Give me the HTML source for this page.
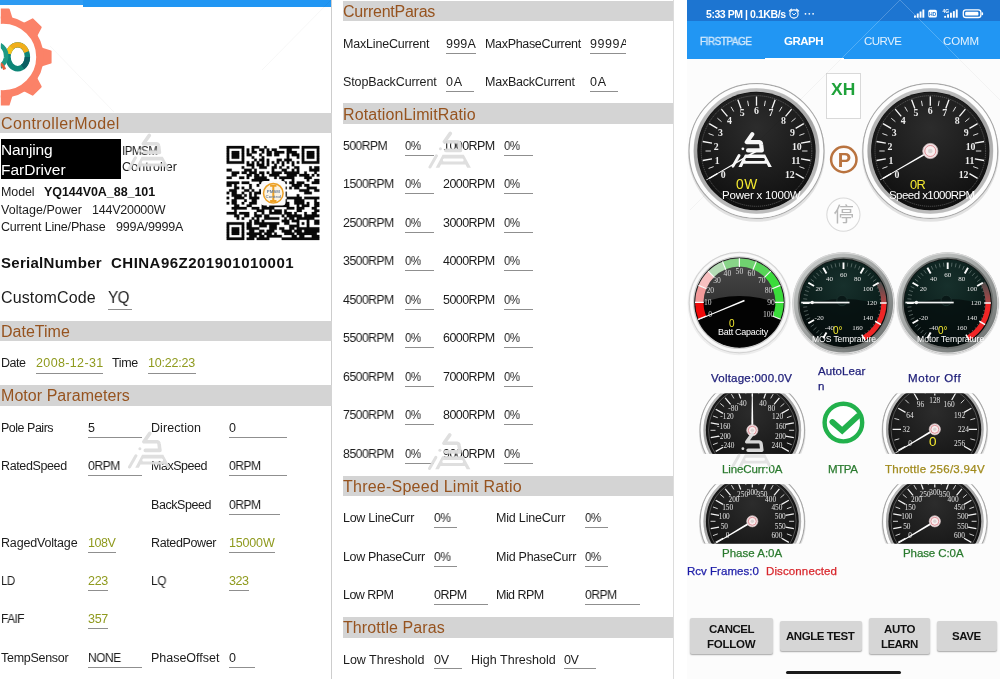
<!DOCTYPE html>
<html lang="en"><head><meta charset="utf-8"><title>Controller Parameters</title>
<style>
html,body{margin:0;padding:0;background:#fff;}
body{width:1000px;height:679px;position:relative;overflow:hidden;font-family:"Liberation Sans", sans-serif;}
.t{position:absolute;white-space:nowrap;line-height:1;transform-origin:0 50%;will-change:transform;}
svg{position:absolute;left:0;top:0;will-change:transform;}
</style></head><body>
<div style="position:absolute;left:0px;top:0px;width:83px;height:5px;background:#2e9bf2;"></div>
<div style="position:absolute;left:83px;top:0px;width:249px;height:6.6px;background:#2196f3;"></div>
<div style="position:absolute;left:331px;top:0px;width:1.1px;height:679px;background:#cdcdcd;"></div>
<div style="position:absolute;left:0px;top:112.5px;width:332px;height:20.6px;background:#d4d4d4;"></div>
<div style="position:absolute;left:1px;top:138.6px;width:120px;height:40.4px;background:#000;"></div>
<div style="position:absolute;left:108px;top:308.6px;width:24px;height:1.2px;background:#8f8f8f;"></div>
<div style="position:absolute;left:0px;top:321.2px;width:332px;height:20.3px;background:#d4d4d4;"></div>
<div style="position:absolute;left:35.6px;top:372.5px;width:67.4px;height:1.2px;background:#8f8f8f;"></div>
<div style="position:absolute;left:148px;top:372.5px;width:48px;height:1.2px;background:#8f8f8f;"></div>
<div style="position:absolute;left:0px;top:385px;width:332px;height:20.8px;background:#d4d4d4;"></div>
<div style="position:absolute;left:87.7px;top:436.6px;width:54.3px;height:1.2px;background:#8f8f8f;"></div>
<div style="position:absolute;left:229px;top:436.6px;width:58px;height:1.2px;background:#8f8f8f;"></div>
<div style="position:absolute;left:87.7px;top:474.6px;width:54.3px;height:1.2px;background:#8f8f8f;"></div>
<div style="position:absolute;left:229px;top:474.6px;width:58px;height:1.2px;background:#8f8f8f;"></div>
<div style="position:absolute;left:229px;top:513.6px;width:51px;height:1.2px;background:#8f8f8f;"></div>
<div style="position:absolute;left:87.7px;top:551.6px;width:27.9px;height:1.2px;background:#8f8f8f;"></div>
<div style="position:absolute;left:229px;top:551.6px;width:45.7px;height:1.2px;background:#8f8f8f;"></div>
<div style="position:absolute;left:87.7px;top:589.6px;width:20.3px;height:1.2px;background:#8f8f8f;"></div>
<div style="position:absolute;left:229px;top:589.6px;width:20px;height:1.2px;background:#8f8f8f;"></div>
<div style="position:absolute;left:87.7px;top:627.6px;width:20.3px;height:1.2px;background:#8f8f8f;"></div>
<div style="position:absolute;left:87.7px;top:666.6px;width:54.3px;height:1.2px;background:#8f8f8f;"></div>
<div style="position:absolute;left:229px;top:666.6px;width:26px;height:1.2px;background:#8f8f8f;"></div>
<div style="position:absolute;left:673.2px;top:0px;width:1px;height:679px;background:#dcdcdc;"></div>
<div style="position:absolute;left:342.8px;top:1px;width:330.49999999999994px;height:19.5px;background:#d4d4d4;"></div>
<div style="position:absolute;left:446px;top:52.8px;width:29.8px;height:1.2px;background:#8f8f8f;"></div>
<div style="position:absolute;left:590px;top:52.8px;width:36px;height:1.2px;background:#8f8f8f;"></div>
<div style="position:absolute;left:446px;top:91px;width:28px;height:1.2px;background:#8f8f8f;"></div>
<div style="position:absolute;left:590px;top:91px;width:28px;height:1.2px;background:#8f8f8f;"></div>
<div style="position:absolute;left:342.8px;top:103.3px;width:330.49999999999994px;height:20.8px;background:#d4d4d4;"></div>
<div style="position:absolute;left:405px;top:155.0px;width:29.4px;height:1.2px;background:#8f8f8f;"></div>
<div style="position:absolute;left:504px;top:155.0px;width:29.4px;height:1.2px;background:#8f8f8f;"></div>
<div style="position:absolute;left:405px;top:193.0px;width:29.4px;height:1.2px;background:#8f8f8f;"></div>
<div style="position:absolute;left:504px;top:193.0px;width:29.4px;height:1.2px;background:#8f8f8f;"></div>
<div style="position:absolute;left:405px;top:232.0px;width:29.4px;height:1.2px;background:#8f8f8f;"></div>
<div style="position:absolute;left:504px;top:232.0px;width:29.4px;height:1.2px;background:#8f8f8f;"></div>
<div style="position:absolute;left:405px;top:270.0px;width:29.4px;height:1.2px;background:#8f8f8f;"></div>
<div style="position:absolute;left:504px;top:270.0px;width:29.4px;height:1.2px;background:#8f8f8f;"></div>
<div style="position:absolute;left:405px;top:309.0px;width:29.4px;height:1.2px;background:#8f8f8f;"></div>
<div style="position:absolute;left:504px;top:309.0px;width:29.4px;height:1.2px;background:#8f8f8f;"></div>
<div style="position:absolute;left:405px;top:347.0px;width:29.4px;height:1.2px;background:#8f8f8f;"></div>
<div style="position:absolute;left:504px;top:347.0px;width:29.4px;height:1.2px;background:#8f8f8f;"></div>
<div style="position:absolute;left:405px;top:386.0px;width:29.4px;height:1.2px;background:#8f8f8f;"></div>
<div style="position:absolute;left:504px;top:386.0px;width:29.4px;height:1.2px;background:#8f8f8f;"></div>
<div style="position:absolute;left:405px;top:424.0px;width:29.4px;height:1.2px;background:#8f8f8f;"></div>
<div style="position:absolute;left:504px;top:424.0px;width:29.4px;height:1.2px;background:#8f8f8f;"></div>
<div style="position:absolute;left:405px;top:463.0px;width:29.4px;height:1.2px;background:#8f8f8f;"></div>
<div style="position:absolute;left:504px;top:463.0px;width:29.4px;height:1.2px;background:#8f8f8f;"></div>
<div style="position:absolute;left:342.8px;top:475.5px;width:330.49999999999994px;height:20.8px;background:#d4d4d4;"></div>
<div style="position:absolute;left:433.7px;top:527.2px;width:23.3px;height:1.2px;background:#8f8f8f;"></div>
<div style="position:absolute;left:584.9px;top:527.2px;width:23.1px;height:1.2px;background:#8f8f8f;"></div>
<div style="position:absolute;left:433.7px;top:565.5px;width:23.3px;height:1.2px;background:#8f8f8f;"></div>
<div style="position:absolute;left:584.9px;top:565.5px;width:23.1px;height:1.2px;background:#8f8f8f;"></div>
<div style="position:absolute;left:433.7px;top:603.8px;width:54.0px;height:1.2px;background:#8f8f8f;"></div>
<div style="position:absolute;left:584.9px;top:603.8px;width:54.7px;height:1.2px;background:#8f8f8f;"></div>
<div style="position:absolute;left:342.8px;top:616.7px;width:330.49999999999994px;height:21.2px;background:#d4d4d4;"></div>
<div style="position:absolute;left:433.7px;top:668.2px;width:28.3px;height:1.2px;background:#8f8f8f;"></div>
<div style="position:absolute;left:564px;top:668.2px;width:32.4px;height:1.2px;background:#8f8f8f;"></div>
<div style="position:absolute;left:687px;top:0px;width:313px;height:679px;background:#fcfcfc;"></div>
<div style="position:absolute;left:687px;top:0px;width:313px;height:21px;background:#1d75d1;"></div>
<div style="position:absolute;left:687px;top:20.7px;width:313px;height:38.8px;background:#2196f3;"></div>
<div style="position:absolute;left:765.2px;top:58.2px;width:78.4px;height:2px;background:#ffffff;"></div>
<div style="position:absolute;left:826px;top:73px;width:34.6px;height:46.2px;background:#fff;border:1px solid #d9d9d9;box-sizing:border-box;"></div>
<div style="position:absolute;left:690px;top:617.6px;width:83px;height:36.4px;background:#d6d6d6;border-radius:2px;box-shadow:0 1px 1.5px rgba(0,0,0,.35);"></div>
<div style="position:absolute;left:780px;top:621px;width:82px;height:29.5px;background:#d6d6d6;border-radius:2px;box-shadow:0 1px 1.5px rgba(0,0,0,.35);"></div>
<div style="position:absolute;left:869.4px;top:617.6px;width:60.2px;height:36.4px;background:#d6d6d6;border-radius:2px;box-shadow:0 1px 1.5px rgba(0,0,0,.35);"></div>
<div style="position:absolute;left:936.6px;top:621px;width:60.2px;height:29.5px;background:#d6d6d6;border-radius:2px;box-shadow:0 1px 1.5px rgba(0,0,0,.35);"></div>
<div style="position:absolute;left:785.6px;top:671px;width:115.2px;height:3px;background:#1a1a1a;border-radius:2px;"></div>
<svg width="1000" height="679" viewBox="0 0 1000 679" style="z-index:2"><defs>
<linearGradient id="bz" x1="0" y1="0" x2="0.25" y2="1">
 <stop offset="0" stop-color="#f6f6f6"/><stop offset="0.3" stop-color="#e4e4e4"/>
 <stop offset="0.62" stop-color="#cfcfcf"/><stop offset="1" stop-color="#ececec"/>
</linearGradient>
<linearGradient id="bzin" x1="0" y1="0" x2="0.3" y2="1"><stop offset="0" stop-color="#c9c9c9"/><stop offset="0.5" stop-color="#a4a4a4"/><stop offset="1" stop-color="#bcbcbc"/></linearGradient>
<linearGradient id="bzd" x1="0" y1="0" x2="0.8" y2="1">
 <stop offset="0" stop-color="#d4d6d5"/><stop offset="0.45" stop-color="#a6a9a8"/><stop offset="1" stop-color="#6f7372"/>
</linearGradient>
<radialGradient id="face" cx="0.5" cy="0.3" r="0.75">
 <stop offset="0" stop-color="#2c2c2c"/><stop offset="0.55" stop-color="#1c1c1c"/><stop offset="1" stop-color="#0d0d0d"/>
</radialGradient>
<radialGradient id="teal" cx="0.5" cy="0.3" r="0.7">
 <stop offset="0" stop-color="#17302c"/><stop offset="0.6" stop-color="#0c201d"/><stop offset="1" stop-color="#04100e"/>
</radialGradient>
<linearGradient id="battface" x1="0" y1="0" x2="0" y2="1">
 <stop offset="0" stop-color="#4a4a4a"/><stop offset="0.5" stop-color="#333"/><stop offset="1" stop-color="#111"/>
</linearGradient>
<linearGradient id="redfade" x1="0" y1="0" x2="0" y2="1">
 <stop offset="0" stop-color="#4b4f4e"/><stop offset="1" stop-color="#b04545"/>
</linearGradient>
</defs>
<ellipse cx="756.5" cy="153" rx="68.6" ry="68.8" fill="rgba(0,0,0,.10)"/><circle cx="756.5" cy="151" r="68" fill="url(#bz)"/><circle cx="756.5" cy="151" r="67.4" fill="none" stroke="#a9a9a9" stroke-width="1.2"/><circle cx="756.5" cy="151" r="64.92" fill="none" stroke="#fdfdfd" stroke-width="3.76"/><circle cx="756.5" cy="151" r="60.67" fill="none" stroke="url(#bzin)" stroke-width="4.14"/><circle cx="756.5" cy="151" r="59.2" fill="#101010"/><circle cx="756.5" cy="151" r="58.6" fill="url(#face)"/><circle cx="756.5" cy="151" r="55.3" fill="none" stroke="#8a8a8a" stroke-width="0.5" stroke-dasharray="1.2 0.8"/><path d="M717.36 173.60L709.22 178.30M711.99 158.85L702.73 160.48M711.99 143.15L702.73 141.52M717.36 128.40L709.22 123.70M727.45 116.37L721.40 109.17M741.04 108.53L737.83 99.69M756.50 105.80L756.50 96.40M771.96 108.53L775.17 99.69M785.55 116.37L791.60 109.17M795.64 128.40L803.78 123.70M801.01 143.15L810.27 141.52M801.01 158.85L810.27 160.48M795.64 173.60L803.78 178.30" stroke="#f4f4f4" stroke-width="1.35" fill="none" stroke-linecap="butt"/><path d="M713.65 166.60L708.58 168.44M710.90 151.00L705.50 151.00M713.65 135.40L708.58 133.56M721.57 121.69L717.43 118.22M733.70 111.51L731.00 106.83M748.58 106.09L747.64 100.77M764.42 106.09L765.36 100.77M779.30 111.51L782.00 106.83M791.43 121.69L795.57 118.22M799.35 135.40L804.42 133.56M802.10 151.00L807.50 151.00M799.35 166.60L804.42 168.44" stroke="#dedede" stroke-width="1.0" fill="none" stroke-linecap="butt"/><g font-family="Liberation Serif, serif" font-size="9.8" font-weight="700" fill="#ececec" text-anchor="middle"><text x="723.2" y="177.5">0</text><text x="717.1" y="164.2">1</text><text x="716.2" y="149.5">2</text><text x="720.5" y="135.5">3</text><text x="729.5" y="124.0">4</text><text x="742.1" y="116.4">5</text><text x="756.5" y="113.7">6</text><text x="770.9" y="116.4">7</text><text x="783.5" y="124.0">8</text><text x="792.5" y="135.5">9</text><text x="796.8" y="149.5">10</text><text x="795.9" y="164.2">11</text><text x="789.8" y="177.5">12</text></g><polygon points="757.00,151.87 756.00,150.13 706.10,179.70 706.45,180.30" fill="#fff"/>
<ellipse cx="930.3" cy="153" rx="68.6" ry="68.8" fill="rgba(0,0,0,.10)"/><circle cx="930.3" cy="151" r="68" fill="url(#bz)"/><circle cx="930.3" cy="151" r="67.4" fill="none" stroke="#a9a9a9" stroke-width="1.2"/><circle cx="930.3" cy="151" r="64.92" fill="none" stroke="#fdfdfd" stroke-width="3.76"/><circle cx="930.3" cy="151" r="60.67" fill="none" stroke="url(#bzin)" stroke-width="4.14"/><circle cx="930.3" cy="151" r="59.2" fill="#101010"/><circle cx="930.3" cy="151" r="58.6" fill="url(#face)"/><circle cx="930.3" cy="151" r="55.3" fill="none" stroke="#8a8a8a" stroke-width="0.5" stroke-dasharray="1.2 0.8"/><path d="M891.16 173.60L883.02 178.30M885.79 158.85L876.53 160.48M885.79 143.15L876.53 141.52M891.16 128.40L883.02 123.70M901.25 116.37L895.20 109.17M914.84 108.53L911.63 99.69M930.30 105.80L930.30 96.40M945.76 108.53L948.97 99.69M959.35 116.37L965.40 109.17M969.44 128.40L977.58 123.70M974.81 143.15L984.07 141.52M974.81 158.85L984.07 160.48M969.44 173.60L977.58 178.30" stroke="#f4f4f4" stroke-width="1.35" fill="none" stroke-linecap="butt"/><path d="M887.45 166.60L882.38 168.44M884.70 151.00L879.30 151.00M887.45 135.40L882.38 133.56M895.37 121.69L891.23 118.22M907.50 111.51L904.80 106.83M922.38 106.09L921.44 100.77M938.22 106.09L939.16 100.77M953.10 111.51L955.80 106.83M965.23 121.69L969.37 118.22M973.15 135.40L978.22 133.56M975.90 151.00L981.30 151.00M973.15 166.60L978.22 168.44" stroke="#dedede" stroke-width="1.0" fill="none" stroke-linecap="butt"/><g font-family="Liberation Serif, serif" font-size="9.8" font-weight="700" fill="#ececec" text-anchor="middle"><text x="897.0" y="177.5">0</text><text x="890.9" y="164.2">1</text><text x="890.0" y="149.5">2</text><text x="894.3" y="135.5">3</text><text x="903.3" y="124.0">4</text><text x="915.9" y="116.4">5</text><text x="930.3" y="113.7">6</text><text x="944.7" y="116.4">7</text><text x="957.3" y="124.0">8</text><text x="966.3" y="135.5">9</text><text x="970.6" y="149.5">10</text><text x="969.7" y="164.2">11</text><text x="963.6" y="177.5">12</text></g><polygon points="930.80,151.87 929.80,150.13 879.90,179.70 880.25,180.30" fill="#fff"/><circle cx="930.3" cy="151" r="7.6" fill="#f1e4e5" stroke="#d9c4c6" stroke-width="0.7"/><circle cx="930.3" cy="151" r="5.5" fill="#f8eeee" stroke="#d97a84" stroke-width="0.8"/><circle cx="930.3" cy="151" r="2.3" fill="#d9d2d2"/>
<circle cx="739.4" cy="303.6" r="51.699999999999996" fill="rgba(0,0,0,.06)"/><circle cx="739.4" cy="302.6" r="50.8" fill="#e9e9e9"/><circle cx="739.4" cy="302.6" r="50.3" fill="none" stroke="#d2d2d2" stroke-width="1"/><circle cx="739.4" cy="302.6" r="47.70" fill="none" stroke="#f9f9f9" stroke-width="3.10"/><circle cx="739.4" cy="302.6" r="45.800000000000004" fill="none" stroke="#cfcfcf" stroke-width="1.2"/><circle cx="739.4" cy="302.6" r="45.2" fill="#101010"/><circle cx="739.4" cy="302.6" r="44.6" fill="url(#battface)"/><clipPath id="bc"><circle cx="739.4" cy="302.6" r="44.6"/></clipPath><g clip-path="url(#bc)"><circle cx="739.4" cy="401.0" r="105" fill="#030303"/></g><path d="M698.42 319.16A44.2 44.2 0 0 1 695.20 302.29L703.40 302.35A36 36 0 0 0 706.02 316.09Z" fill="#f00a0a"/><path d="M695.20 302.29A44.2 44.2 0 0 1 698.65 285.47L706.21 288.65A36 36 0 0 0 703.40 302.35Z" fill="#f39a9a"/><path d="M698.65 285.47A44.2 44.2 0 0 1 708.26 271.24L714.03 277.06A36 36 0 0 0 706.21 288.65Z" fill="#f7c0c0"/><path d="M708.26 271.24A44.2 44.2 0 0 1 722.56 261.74L725.68 269.32A36 36 0 0 0 714.03 277.06Z" fill="#b5dcb5"/><path d="M722.56 261.74A44.2 44.2 0 0 1 739.40 258.40L739.40 266.60A36 36 0 0 0 725.68 269.32Z" fill="#88d488"/><path d="M739.40 258.40A44.2 44.2 0 0 1 756.24 261.74L753.12 269.32A36 36 0 0 0 739.40 266.60Z" fill="#70d270"/><path d="M756.24 261.74A44.2 44.2 0 0 1 770.54 271.24L764.77 277.06A36 36 0 0 0 753.12 269.32Z" fill="#58d458"/><path d="M770.54 271.24A44.2 44.2 0 0 1 780.38 319.16L772.78 316.09A36 36 0 0 0 764.77 277.06Z" fill="#3bdc3b"/><path d="M706.39 315.94L698.23 319.23M703.80 302.35L695.00 302.29M706.58 288.80L698.47 285.39M714.32 277.34L708.11 271.10M725.83 269.69L722.48 261.55M739.40 267.00L739.40 258.20M752.97 269.69L756.32 261.55M764.48 277.34L770.69 271.10M772.22 288.80L780.33 285.39M775.00 302.35L783.80 302.29M772.41 315.94L780.57 319.23" stroke="#fafafa" stroke-width="1.2" fill="none" stroke-linecap="butt"/><g font-family="Liberation Serif, serif" font-size="7.6" font-weight="400" fill="#d8d8d8" text-anchor="middle"><text x="710.1" y="317.0">0</text><text x="707.8" y="305.0">10</text><text x="710.3" y="292.9">20</text><text x="717.1" y="282.8">30</text><text x="727.4" y="276.0">40</text><text x="739.4" y="273.6">50</text><text x="751.4" y="276.0">60</text><text x="761.7" y="282.8">70</text><text x="768.5" y="292.9">80</text><text x="771.0" y="305.0">90</text><text x="768.7" y="317.0">100</text></g><polygon points="744.83,301.33 744.14,299.66 697.69,319.50 697.96,320.14" fill="#fff"/>
<circle cx="843.5" cy="304.2" r="51.599999999999994" fill="rgba(0,0,0,.10)"/><circle cx="843.5" cy="303" r="50.8" fill="url(#bzd)"/><circle cx="843.5" cy="303" r="50.199999999999996" fill="none" stroke="#d9d9d9" stroke-width="1.2"/><circle cx="843.5" cy="303" r="44.800000000000004" fill="none" stroke="#6e7270" stroke-width="2"/><circle cx="843.5" cy="303" r="44.2" fill="#101010"/><circle cx="843.5" cy="303" r="43.6" fill="url(#teal)"/><clipPath id="tca"><circle cx="843.5" cy="303" r="43.6"/></clipPath><g clip-path="url(#tca)"><circle cx="843.5" cy="419" r="120" fill="#050e0d" opacity="0.75"/></g><path d="M822.05 332.53L819.69 335.77M819.08 330.12L816.40 333.10M816.38 327.42L813.40 330.10M813.97 324.45L810.73 326.81M810.16 317.85L806.50 319.47M808.79 314.28L804.98 315.52M807.80 310.59L803.89 311.42M807.20 306.82L803.22 307.23M807.20 299.18L803.22 298.77M807.80 295.41L803.89 294.58M808.79 291.72L804.98 290.48M810.16 288.15L806.50 286.53M813.97 281.55L810.73 279.19M816.38 278.58L813.40 275.90M819.08 275.88L816.40 272.90M822.05 273.47L819.69 270.23M828.65 269.66L827.03 266.00M832.22 268.29L830.98 264.48M835.91 267.30L835.08 263.39M839.68 266.70L839.27 262.72M847.32 266.70L847.73 262.72M851.09 267.30L851.92 263.39M854.78 268.29L856.02 264.48M858.35 269.66L859.97 266.00M864.95 273.47L867.31 270.23M867.92 275.88L870.60 272.90M870.62 278.58L873.60 275.90M873.03 281.55L876.27 279.19M876.84 288.15L880.50 286.53M878.21 291.72L882.02 290.48M879.20 295.41L883.11 294.58M879.80 299.18L883.78 298.77M879.80 306.82L883.78 307.23M879.20 310.59L883.11 311.42M878.21 314.28L882.02 315.52M876.84 317.85L880.50 319.47M873.03 324.45L876.27 326.81M870.62 327.42L873.60 330.10M867.92 330.12L870.60 333.10M864.95 332.53L867.31 335.77" stroke="#7f8f8c" stroke-width="0.6" fill="none" stroke-linecap="butt"/><path d="M880.74 281.50A43.0 43.0 0 0 1 886.50 303.00L881.30 303.00A37.8 37.8 0 0 0 876.24 284.10Z" fill="url(#redfade)"/><path d="M886.50 303.00A43.0 43.0 0 0 1 865.00 340.24L862.40 335.74A37.8 37.8 0 0 0 881.30 303.00Z" fill="#ef2626"/><path d="M826.50 332.44L823.20 338.16M814.06 320.00L808.34 323.30M809.50 303.00L802.90 303.00M814.06 286.00L808.34 282.70M826.50 273.56L823.20 267.84M843.50 269.00L843.50 262.40M860.50 273.56L863.80 267.84M872.94 286.00L878.66 282.70" stroke="#fbfbfb" stroke-width="1.9" fill="none" stroke-linecap="butt"/><path d="M880.00 303.00L886.70 303.00M875.11 321.25L880.91 324.60M861.75 334.61L865.10 340.41" stroke="#fbfbfb" stroke-width="1.5" fill="none" stroke-linecap="butt"/><g font-family="Liberation Serif, serif" font-size="7" font-weight="400" fill="#e4e4e4" text-anchor="middle"><text x="829.4" y="329.8">-40</text><text x="819.1" y="319.5">-20</text><text x="819.1" y="291.3">20</text><text x="829.4" y="281.0">40</text><text x="843.5" y="277.2">60</text><text x="857.6" y="281.0">80</text><text x="867.9" y="291.3">100</text><text x="871.7" y="305.4">120</text><text x="867.9" y="319.5">140</text><text x="857.6" y="329.8">160</text></g><circle cx="842.0" cy="300.5" r="5.2" fill="#091817" stroke="#1e3531" stroke-width="0.8"/><rect x="801.2" y="301.7" width="48.3" height="1.7" fill="#f4f4f4"/><circle cx="812.2" cy="302.55" r="1.7" fill="#f4f4f4"/>
<circle cx="947.7" cy="304.2" r="51.599999999999994" fill="rgba(0,0,0,.10)"/><circle cx="947.7" cy="303" r="50.8" fill="url(#bzd)"/><circle cx="947.7" cy="303" r="50.199999999999996" fill="none" stroke="#d9d9d9" stroke-width="1.2"/><circle cx="947.7" cy="303" r="44.800000000000004" fill="none" stroke="#6e7270" stroke-width="2"/><circle cx="947.7" cy="303" r="44.2" fill="#101010"/><circle cx="947.7" cy="303" r="43.6" fill="url(#teal)"/><clipPath id="tcb"><circle cx="947.7" cy="303" r="43.6"/></clipPath><g clip-path="url(#tcb)"><circle cx="947.7" cy="419" r="120" fill="#050e0d" opacity="0.75"/></g><path d="M926.25 332.53L923.89 335.77M923.28 330.12L920.60 333.10M920.58 327.42L917.60 330.10M918.17 324.45L914.93 326.81M914.36 317.85L910.70 319.47M912.99 314.28L909.18 315.52M912.00 310.59L908.09 311.42M911.40 306.82L907.42 307.23M911.40 299.18L907.42 298.77M912.00 295.41L908.09 294.58M912.99 291.72L909.18 290.48M914.36 288.15L910.70 286.53M918.17 281.55L914.93 279.19M920.58 278.58L917.60 275.90M923.28 275.88L920.60 272.90M926.25 273.47L923.89 270.23M932.85 269.66L931.23 266.00M936.42 268.29L935.18 264.48M940.11 267.30L939.28 263.39M943.88 266.70L943.47 262.72M951.52 266.70L951.93 262.72M955.29 267.30L956.12 263.39M958.98 268.29L960.22 264.48M962.55 269.66L964.17 266.00M969.15 273.47L971.51 270.23M972.12 275.88L974.80 272.90M974.82 278.58L977.80 275.90M977.23 281.55L980.47 279.19M981.04 288.15L984.70 286.53M982.41 291.72L986.22 290.48M983.40 295.41L987.31 294.58M984.00 299.18L987.98 298.77M984.00 306.82L987.98 307.23M983.40 310.59L987.31 311.42M982.41 314.28L986.22 315.52M981.04 317.85L984.70 319.47M977.23 324.45L980.47 326.81M974.82 327.42L977.80 330.10M972.12 330.12L974.80 333.10M969.15 332.53L971.51 335.77" stroke="#7f8f8c" stroke-width="0.6" fill="none" stroke-linecap="butt"/><path d="M984.94 281.50A43.0 43.0 0 0 1 990.70 303.00L985.50 303.00A37.8 37.8 0 0 0 980.44 284.10Z" fill="url(#redfade)"/><path d="M990.70 303.00A43.0 43.0 0 0 1 969.20 340.24L966.60 335.74A37.8 37.8 0 0 0 985.50 303.00Z" fill="#ef2626"/><path d="M930.70 332.44L927.40 338.16M918.26 320.00L912.54 323.30M913.70 303.00L907.10 303.00M918.26 286.00L912.54 282.70M930.70 273.56L927.40 267.84M947.70 269.00L947.70 262.40M964.70 273.56L968.00 267.84M977.14 286.00L982.86 282.70" stroke="#fbfbfb" stroke-width="1.9" fill="none" stroke-linecap="butt"/><path d="M984.20 303.00L990.90 303.00M979.31 321.25L985.11 324.60M965.95 334.61L969.30 340.41" stroke="#fbfbfb" stroke-width="1.5" fill="none" stroke-linecap="butt"/><g font-family="Liberation Serif, serif" font-size="7" font-weight="400" fill="#e4e4e4" text-anchor="middle"><text x="933.6" y="329.8">-40</text><text x="923.3" y="319.5">-20</text><text x="923.3" y="291.3">20</text><text x="933.6" y="281.0">40</text><text x="947.7" y="277.2">60</text><text x="961.8" y="281.0">80</text><text x="972.1" y="291.3">100</text><text x="975.9" y="305.4">120</text><text x="972.1" y="319.5">140</text><text x="961.8" y="329.8">160</text></g><circle cx="946.2" cy="300.5" r="5.2" fill="#091817" stroke="#1e3531" stroke-width="0.8"/><rect x="905.4000000000001" y="301.7" width="48.3" height="1.7" fill="#f4f4f4"/><circle cx="916.4000000000001" cy="302.55" r="1.7" fill="#f4f4f4"/>
<clipPath id="cL"><rect x="692.3" y="393.4" width="120" height="60.400000000000034"/></clipPath><g clip-path="url(#cL)"><ellipse cx="752.3" cy="432.3" rx="53.4" ry="53.599999999999994" fill="rgba(0,0,0,.10)"/><circle cx="752.3" cy="430.3" r="52.8" fill="url(#bz)"/><circle cx="752.3" cy="430.3" r="52.199999999999996" fill="none" stroke="#a9a9a9" stroke-width="1.2"/><circle cx="752.3" cy="430.3" r="50.20" fill="none" stroke="#fdfdfd" stroke-width="2.80"/><circle cx="752.3" cy="430.3" r="47.34" fill="none" stroke="url(#bzin)" stroke-width="3.08"/><circle cx="752.3" cy="430.3" r="46.4" fill="#101010"/><circle cx="752.3" cy="430.3" r="45.8" fill="url(#face)"/><circle cx="752.3" cy="430.3" r="43.8" fill="none" stroke="#8a8a8a" stroke-width="0.5"/><path d="M723.03 447.20L715.75 451.40M719.01 436.17L710.74 437.63M719.01 424.43L710.74 422.97M723.03 413.40L715.75 409.20M730.57 404.41L725.17 397.97M740.74 398.54L737.87 390.64M752.30 396.50L752.30 388.10M763.86 398.54L766.73 390.64M774.03 404.41L779.43 397.97M781.57 413.40L788.85 409.20M785.59 424.43L793.86 422.97M785.59 436.17L793.86 437.63M781.57 447.20L788.85 451.40" stroke="#f2f2f2" stroke-width="1.25" fill="none" stroke-linecap="butt"/><path d="M717.72 442.89L713.02 444.60M715.50 430.30L710.50 430.30M717.72 417.71L713.02 416.00M724.11 406.65L720.28 403.43M733.90 398.43L731.40 394.10M745.91 394.06L745.04 389.14M758.69 394.06L759.56 389.14M770.70 398.43L773.20 394.10M780.49 406.65L784.32 403.43M786.88 417.71L791.58 416.00M789.10 430.30L794.10 430.30M786.88 442.89L791.58 444.60" stroke="#dadada" stroke-width="0.95" fill="none" stroke-linecap="butt"/><g font-family="Liberation Serif, serif" font-size="7.3" font-weight="400" fill="#e2e2e2" text-anchor="middle"><text x="727.7" y="447.8">-240</text><text x="724.1" y="438.5">-200</text><text x="723.8" y="428.5">-160</text><text x="727.0" y="419.0">-120</text><text x="733.2" y="411.2">-80</text><text x="741.7" y="406.0">-40</text><text x="762.9" y="406.0">40</text><text x="771.4" y="411.2">80</text><text x="777.6" y="419.0">120</text><text x="780.8" y="428.5">160</text><text x="780.5" y="438.5">200</text><text x="776.9" y="447.8">240</text></g><polygon points="751.25,430.30 753.35,430.30 752.65,386.30 751.95,386.30" fill="#fff"/><circle cx="752.3" cy="430.3" r="5.6" fill="#f1e4e5" stroke="#d9c4c6" stroke-width="0.7"/><circle cx="752.3" cy="430.3" r="4.0" fill="#f8eeee" stroke="#d97a84" stroke-width="0.8"/><circle cx="752.3" cy="430.3" r="1.7" fill="#d9d2d2"/></g>
<clipPath id="cT"><rect x="874.8" y="393.4" width="120" height="60.400000000000034"/></clipPath><g clip-path="url(#cT)"><ellipse cx="934.8" cy="431.3" rx="53.4" ry="53.599999999999994" fill="rgba(0,0,0,.10)"/><circle cx="934.8" cy="429.3" r="52.8" fill="url(#bz)"/><circle cx="934.8" cy="429.3" r="52.199999999999996" fill="none" stroke="#a9a9a9" stroke-width="1.2"/><circle cx="934.8" cy="429.3" r="50.20" fill="none" stroke="#fdfdfd" stroke-width="2.80"/><circle cx="934.8" cy="429.3" r="47.34" fill="none" stroke="url(#bzin)" stroke-width="3.08"/><circle cx="934.8" cy="429.3" r="46.4" fill="#101010"/><circle cx="934.8" cy="429.3" r="45.8" fill="url(#face)"/><circle cx="934.8" cy="429.3" r="43.8" fill="none" stroke="#8a8a8a" stroke-width="0.5"/><path d="M905.53 446.20L898.25 450.40M901.00 429.30L892.60 429.30M905.53 412.40L898.25 408.20M917.90 400.03L913.70 392.75M934.80 395.50L934.80 387.10M951.70 400.03L955.90 392.75M964.07 412.40L971.35 408.20M968.60 429.30L977.00 429.30M964.07 446.20L971.35 450.40" stroke="#f2f2f2" stroke-width="1.25" fill="none" stroke-linecap="butt"/><path d="M899.25 438.82L894.42 440.12M899.25 419.78L894.42 418.48M908.78 403.28L905.24 399.74M925.28 393.75L923.98 388.92M944.32 393.75L945.62 388.92M960.82 403.28L964.36 399.74M970.35 419.78L975.18 418.48M970.35 438.82L975.18 440.12" stroke="#dadada" stroke-width="0.95" fill="none" stroke-linecap="butt"/><g font-family="Liberation Serif, serif" font-size="7.3" font-weight="400" fill="#e2e2e2" text-anchor="middle"><text x="910.0" y="446.1">0</text><text x="906.2" y="431.8">32</text><text x="910.0" y="417.5">64</text><text x="920.5" y="407.0">96</text><text x="934.8" y="403.2">128</text><text x="949.1" y="407.0">160</text><text x="959.6" y="417.5">192</text><text x="963.4" y="431.8">224</text><text x="959.6" y="446.1">256</text></g><polygon points="935.34,430.20 934.26,428.40 895.19,452.69 895.55,453.29" fill="#fff"/><circle cx="934.8" cy="429.3" r="5.6" fill="#f1e4e5" stroke="#d9c4c6" stroke-width="0.7"/><circle cx="934.8" cy="429.3" r="4.0" fill="#f8eeee" stroke="#d97a84" stroke-width="0.8"/><circle cx="934.8" cy="429.3" r="1.7" fill="#d9d2d2"/></g>
<clipPath id="cA"><rect x="692.3" y="484.2" width="120" height="59.400000000000034"/></clipPath><g clip-path="url(#cA)"><ellipse cx="752.3" cy="523.3" rx="53.4" ry="53.599999999999994" fill="rgba(0,0,0,.10)"/><circle cx="752.3" cy="521.3" r="52.8" fill="url(#bz)"/><circle cx="752.3" cy="521.3" r="52.199999999999996" fill="none" stroke="#a9a9a9" stroke-width="1.2"/><circle cx="752.3" cy="521.3" r="50.20" fill="none" stroke="#fdfdfd" stroke-width="2.80"/><circle cx="752.3" cy="521.3" r="47.34" fill="none" stroke="url(#bzin)" stroke-width="3.08"/><circle cx="752.3" cy="521.3" r="46.4" fill="#101010"/><circle cx="752.3" cy="521.3" r="45.8" fill="url(#face)"/><circle cx="752.3" cy="521.3" r="43.8" fill="none" stroke="#8a8a8a" stroke-width="0.5"/><path d="M723.03 538.20L715.75 542.40M719.01 527.17L710.74 528.63M719.01 515.43L710.74 513.97M723.03 504.40L715.75 500.20M730.57 495.41L725.17 488.97M740.74 489.54L737.87 481.64M752.30 487.50L752.30 479.10M763.86 489.54L766.73 481.64M774.03 495.41L779.43 488.97M781.57 504.40L788.85 500.20M785.59 515.43L793.86 513.97M785.59 527.17L793.86 528.63M781.57 538.20L788.85 542.40" stroke="#f2f2f2" stroke-width="1.25" fill="none" stroke-linecap="butt"/><path d="M717.72 533.89L713.02 535.60M715.50 521.30L710.50 521.30M717.72 508.71L713.02 507.00M724.11 497.65L720.28 494.43M733.90 489.43L731.40 485.10M745.91 485.06L745.04 480.14M758.69 485.06L759.56 480.14M770.70 489.43L773.20 485.10M780.49 497.65L784.32 494.43M786.88 508.71L791.58 507.00M789.10 521.30L794.10 521.30M786.88 533.89L791.58 535.60" stroke="#dadada" stroke-width="0.95" fill="none" stroke-linecap="butt"/><g font-family="Liberation Serif, serif" font-size="7.3" font-weight="400" fill="#e2e2e2" text-anchor="middle"><text x="727.7" y="538.0">0</text><text x="724.3" y="528.7">50</text><text x="724.3" y="518.9">100</text><text x="727.7" y="509.6">150</text><text x="734.0" y="502.0">200</text><text x="742.6" y="497.1">250</text><text x="752.3" y="495.4">300</text><text x="762.0" y="497.1">350</text><text x="770.6" y="502.0">400</text><text x="776.9" y="509.6">450</text><text x="780.3" y="518.9">500</text><text x="780.3" y="528.7">550</text><text x="776.9" y="538.0">600</text></g><polygon points="752.84,522.20 751.76,520.40 712.69,544.69 713.05,545.29" fill="#fff"/><circle cx="752.3" cy="521.3" r="5.6" fill="#f1e4e5" stroke="#d9c4c6" stroke-width="0.7"/><circle cx="752.3" cy="521.3" r="4.0" fill="#f8eeee" stroke="#d97a84" stroke-width="0.8"/><circle cx="752.3" cy="521.3" r="1.7" fill="#d9d2d2"/></g>
<clipPath id="cC"><rect x="874.8" y="484.2" width="120" height="59.400000000000034"/></clipPath><g clip-path="url(#cC)"><ellipse cx="934.8" cy="523.3" rx="53.4" ry="53.599999999999994" fill="rgba(0,0,0,.10)"/><circle cx="934.8" cy="521.3" r="52.8" fill="url(#bz)"/><circle cx="934.8" cy="521.3" r="52.199999999999996" fill="none" stroke="#a9a9a9" stroke-width="1.2"/><circle cx="934.8" cy="521.3" r="50.20" fill="none" stroke="#fdfdfd" stroke-width="2.80"/><circle cx="934.8" cy="521.3" r="47.34" fill="none" stroke="url(#bzin)" stroke-width="3.08"/><circle cx="934.8" cy="521.3" r="46.4" fill="#101010"/><circle cx="934.8" cy="521.3" r="45.8" fill="url(#face)"/><circle cx="934.8" cy="521.3" r="43.8" fill="none" stroke="#8a8a8a" stroke-width="0.5"/><path d="M905.53 538.20L898.25 542.40M901.51 527.17L893.24 528.63M901.51 515.43L893.24 513.97M905.53 504.40L898.25 500.20M913.07 495.41L907.67 488.97M923.24 489.54L920.37 481.64M934.80 487.50L934.80 479.10M946.36 489.54L949.23 481.64M956.53 495.41L961.93 488.97M964.07 504.40L971.35 500.20M968.09 515.43L976.36 513.97M968.09 527.17L976.36 528.63M964.07 538.20L971.35 542.40" stroke="#f2f2f2" stroke-width="1.25" fill="none" stroke-linecap="butt"/><path d="M900.22 533.89L895.52 535.60M898.00 521.30L893.00 521.30M900.22 508.71L895.52 507.00M906.61 497.65L902.78 494.43M916.40 489.43L913.90 485.10M928.41 485.06L927.54 480.14M941.19 485.06L942.06 480.14M953.20 489.43L955.70 485.10M962.99 497.65L966.82 494.43M969.38 508.71L974.08 507.00M971.60 521.30L976.60 521.30M969.38 533.89L974.08 535.60" stroke="#dadada" stroke-width="0.95" fill="none" stroke-linecap="butt"/><g font-family="Liberation Serif, serif" font-size="7.3" font-weight="400" fill="#e2e2e2" text-anchor="middle"><text x="910.2" y="538.0">0</text><text x="906.8" y="528.7">50</text><text x="906.8" y="518.9">100</text><text x="910.2" y="509.6">150</text><text x="916.5" y="502.0">200</text><text x="925.1" y="497.1">250</text><text x="934.8" y="495.4">300</text><text x="944.5" y="497.1">350</text><text x="953.1" y="502.0">400</text><text x="959.4" y="509.6">450</text><text x="962.8" y="518.9">500</text><text x="962.8" y="528.7">550</text><text x="959.4" y="538.0">600</text></g><polygon points="935.34,522.20 934.26,520.40 895.19,544.69 895.55,545.29" fill="#fff"/><circle cx="934.8" cy="521.3" r="5.6" fill="#f1e4e5" stroke="#d9c4c6" stroke-width="0.7"/><circle cx="934.8" cy="521.3" r="4.0" fill="#f8eeee" stroke="#d97a84" stroke-width="0.8"/><circle cx="934.8" cy="521.3" r="1.7" fill="#d9d2d2"/></g>
<circle cx="843.4" cy="422.6" r="18.8" fill="#fff" stroke="#22b14c" stroke-width="4.4"/><path d="M832.4 422 L842.2 430.6 L857.6 416.4" fill="none" stroke="#22b14c" stroke-width="5.8" stroke-linecap="round" stroke-linejoin="miter"/>
<circle cx="843.8" cy="159.5" r="12.7" fill="none" stroke="#b9733f" stroke-width="2.5"/><text x="844.3" y="166.9" font-family="Liberation Sans, sans-serif" font-size="20" font-weight="700" fill="#b9733f" text-anchor="middle">P</text>
<circle cx="843.4" cy="214.6" r="16.6" fill="#fdfdfd" stroke="#dadada" stroke-width="1.1"/><text x="843.8" y="222.2" font-family="Noto Sans CJK SC, sans-serif" font-size="20.5" fill="#b8b8b8" text-anchor="middle">停</text>
<rect x="914.0" y="15.5" width="1.9" height="2.2" fill="#fff"/><rect x="916.8" y="13.5" width="1.9" height="4.2" fill="#fff"/><rect x="919.6" y="11.5" width="1.9" height="6.2" fill="#fff"/><rect x="922.4" y="9.5" width="1.9" height="8.2" fill="#fff"/><rect x="928.3" y="9.8" width="8.6" height="7.8" rx="1.6" fill="#fff"/><text x="932.6" y="16" font-family="Liberation Sans, sans-serif" font-size="5" font-weight="700" fill="#1d75d1" text-anchor="middle">HD</text><text x="945.8" y="12.6" font-family="Liberation Sans, sans-serif" font-size="5" font-weight="700" fill="#fff" text-anchor="middle">4G</text><rect x="944.2" y="15.9" width="1.9" height="1.8" fill="#fff"/><rect x="947.1" y="14.3" width="1.9" height="3.4" fill="#fff"/><rect x="950.0" y="12.7" width="1.9" height="5.0" fill="#fff"/><rect x="952.9" y="11.1" width="1.9" height="6.6" fill="#fff"/><rect x="955.8" y="9.5" width="1.9" height="8.2" fill="#fff"/><rect x="963.3" y="9.9" width="17.6" height="7.6" rx="2.6" fill="none" stroke="#fff" stroke-width="1.3"/><rect x="965.2" y="11.8" width="13.2" height="3.8" rx="1.2" fill="#fff"/><rect x="981.6" y="12.2" width="1.5" height="3" rx="0.7" fill="#fff"/><circle cx="794" cy="14" r="4.1" fill="none" stroke="#fff" stroke-width="1.1"/><path d="M792.2 13.2L794 15L796 13" stroke="#fff" stroke-width="0.9" fill="none"/><path d="M789.4 11L791.4 9.2M798.6 11L796.6 9.2" stroke="#fff" stroke-width="1.2" stroke-linecap="round"/><circle cx="805.5" cy="13.8" r="0.9" fill="#fff"/><circle cx="809.3" cy="13.8" r="0.9" fill="#fff"/><circle cx="813.1" cy="13.8" r="0.9" fill="#fff"/>
<clipPath id="gc"><rect x="0.8" y="7" width="60" height="104"/></clipPath><g clip-path="url(#gc)"><path d="M-6.6 18.5 L-3.5999999999999996 9 Q-3.4000000000000004 8.399999999999999 -2.5999999999999996 8.399999999999999 L8.6 8.399999999999999 Q9.4 8.399999999999999 9.6 9 L12.6 18.5 Z" fill="#fb8268" transform="rotate(0 3 57)"/><path d="M-6.6 18.5 L-3.5999999999999996 9 Q-3.4000000000000004 8.399999999999999 -2.5999999999999996 8.399999999999999 L8.6 8.399999999999999 Q9.4 8.399999999999999 9.6 9 L12.6 18.5 Z" fill="#fb8268" transform="rotate(45 3 57)"/><path d="M-6.6 18.5 L-3.5999999999999996 9 Q-3.4000000000000004 8.399999999999999 -2.5999999999999996 8.399999999999999 L8.6 8.399999999999999 Q9.4 8.399999999999999 9.6 9 L12.6 18.5 Z" fill="#fb8268" transform="rotate(90 3 57)"/><path d="M-6.6 18.5 L-3.5999999999999996 9 Q-3.4000000000000004 8.399999999999999 -2.5999999999999996 8.399999999999999 L8.6 8.399999999999999 Q9.4 8.399999999999999 9.6 9 L12.6 18.5 Z" fill="#fb8268" transform="rotate(135 3 57)"/><path d="M-6.6 18.5 L-3.5999999999999996 9 Q-3.4000000000000004 8.399999999999999 -2.5999999999999996 8.399999999999999 L8.6 8.399999999999999 Q9.4 8.399999999999999 9.6 9 L12.6 18.5 Z" fill="#fb8268" transform="rotate(180 3 57)"/><path d="M-6.6 18.5 L-3.5999999999999996 9 Q-3.4000000000000004 8.399999999999999 -2.5999999999999996 8.399999999999999 L8.6 8.399999999999999 Q9.4 8.399999999999999 9.6 9 L12.6 18.5 Z" fill="#fb8268" transform="rotate(225 3 57)"/><path d="M-6.6 18.5 L-3.5999999999999996 9 Q-3.4000000000000004 8.399999999999999 -2.5999999999999996 8.399999999999999 L8.6 8.399999999999999 Q9.4 8.399999999999999 9.6 9 L12.6 18.5 Z" fill="#fb8268" transform="rotate(270 3 57)"/><path d="M-6.6 18.5 L-3.5999999999999996 9 Q-3.4000000000000004 8.399999999999999 -2.5999999999999996 8.399999999999999 L8.6 8.399999999999999 Q9.4 8.399999999999999 9.6 9 L12.6 18.5 Z" fill="#fb8268" transform="rotate(315 3 57)"/><circle cx="3" cy="57" r="36.9" fill="none" stroke="#fb8268" stroke-width="7.4"/><ellipse cx="17.7" cy="56.8" rx="9.7" ry="11.9" fill="none" stroke="#0d8577" stroke-width="5.4"/><path d="M8.3 53.8 A9.7 11.9 0 0 1 26.6 52" fill="none" stroke="#f0ae1c" stroke-width="5.4"/><path d="M8.3 53.8 A9.7 11.9 0 0 1 11.5 47.6" fill="none" stroke="#f3c321" stroke-width="5.4"/><path d="M22.6 67 A9.7 11.9 0 0 0 27.4 57" fill="none" stroke="#0a5f63" stroke-width="5.4"/><path d="M0 45 Q7 49 6 58 Q5.2 63 0 67" fill="none" stroke="#1e9a84" stroke-width="4.6"/><path d="M0 63.5 Q3.5 65.5 4.6 69.5" fill="none" stroke="#e0603c" stroke-width="3"/></g>
<path d="M226.70 146.00h17.52v2.54h-17.52zM251.73 146.00h7.51v2.54h-7.51zM264.24 146.00h2.50v2.54h-2.50zM279.26 146.00h20.02v2.54h-20.02zM301.78 146.00h17.52v2.54h-17.52zM226.70 148.54h2.50v2.54h-2.50zM241.72 148.54h2.50v2.54h-2.50zM246.72 148.54h2.50v2.54h-2.50zM251.73 148.54h2.50v2.54h-2.50zM259.24 148.54h5.01v2.54h-5.01zM266.74 148.54h2.50v2.54h-2.50zM271.75 148.54h5.01v2.54h-5.01zM286.76 148.54h5.01v2.54h-5.01zM301.78 148.54h2.50v2.54h-2.50zM316.80 148.54h2.50v2.54h-2.50zM226.70 151.08h2.50v2.54h-2.50zM231.71 151.08h7.51v2.54h-7.51zM241.72 151.08h2.50v2.54h-2.50zM246.72 151.08h2.50v2.54h-2.50zM251.73 151.08h5.01v2.54h-5.01zM261.74 151.08h2.50v2.54h-2.50zM266.74 151.08h5.01v2.54h-5.01zM274.25 151.08h10.01v2.54h-10.01zM286.76 151.08h10.01v2.54h-10.01zM301.78 151.08h2.50v2.54h-2.50zM306.79 151.08h7.51v2.54h-7.51zM316.80 151.08h2.50v2.54h-2.50zM226.70 153.62h2.50v2.54h-2.50zM231.71 153.62h7.51v2.54h-7.51zM241.72 153.62h2.50v2.54h-2.50zM246.72 153.62h5.01v2.54h-5.01zM259.24 153.62h2.50v2.54h-2.50zM266.74 153.62h5.01v2.54h-5.01zM274.25 153.62h5.01v2.54h-5.01zM286.76 153.62h2.50v2.54h-2.50zM291.77 153.62h7.51v2.54h-7.51zM301.78 153.62h2.50v2.54h-2.50zM306.79 153.62h7.51v2.54h-7.51zM316.80 153.62h2.50v2.54h-2.50zM226.70 156.16h2.50v2.54h-2.50zM231.71 156.16h7.51v2.54h-7.51zM241.72 156.16h2.50v2.54h-2.50zM251.73 156.16h2.50v2.54h-2.50zM261.74 156.16h2.50v2.54h-2.50zM286.76 156.16h2.50v2.54h-2.50zM296.78 156.16h2.50v2.54h-2.50zM301.78 156.16h2.50v2.54h-2.50zM306.79 156.16h7.51v2.54h-7.51zM316.80 156.16h2.50v2.54h-2.50zM226.70 158.70h2.50v2.54h-2.50zM241.72 158.70h2.50v2.54h-2.50zM254.23 158.70h2.50v2.54h-2.50zM259.24 158.70h5.01v2.54h-5.01zM266.74 158.70h2.50v2.54h-2.50zM276.75 158.70h5.01v2.54h-5.01zM284.26 158.70h7.51v2.54h-7.51zM301.78 158.70h2.50v2.54h-2.50zM316.80 158.70h2.50v2.54h-2.50zM226.70 161.24h17.52v2.54h-17.52zM246.72 161.24h2.50v2.54h-2.50zM251.73 161.24h2.50v2.54h-2.50zM256.73 161.24h2.50v2.54h-2.50zM261.74 161.24h2.50v2.54h-2.50zM266.74 161.24h2.50v2.54h-2.50zM271.75 161.24h2.50v2.54h-2.50zM276.75 161.24h2.50v2.54h-2.50zM281.76 161.24h2.50v2.54h-2.50zM286.76 161.24h2.50v2.54h-2.50zM291.77 161.24h2.50v2.54h-2.50zM296.78 161.24h2.50v2.54h-2.50zM301.78 161.24h17.52v2.54h-17.52zM246.72 163.78h7.51v2.54h-7.51zM256.73 163.78h7.51v2.54h-7.51zM266.74 163.78h2.50v2.54h-2.50zM274.25 163.78h2.50v2.54h-2.50zM281.76 163.78h2.50v2.54h-2.50zM291.77 163.78h2.50v2.54h-2.50zM241.72 166.32h2.50v2.54h-2.50zM251.73 166.32h2.50v2.54h-2.50zM259.24 166.32h7.51v2.54h-7.51zM271.75 166.32h5.01v2.54h-5.01zM279.26 166.32h2.50v2.54h-2.50zM286.76 166.32h2.50v2.54h-2.50zM294.27 166.32h5.01v2.54h-5.01zM309.29 166.32h2.50v2.54h-2.50zM314.29 166.32h5.01v2.54h-5.01zM226.70 168.86h5.01v2.54h-5.01zM244.22 168.86h7.51v2.54h-7.51zM254.23 168.86h2.50v2.54h-2.50zM271.75 168.86h2.50v2.54h-2.50zM281.76 168.86h5.01v2.54h-5.01zM291.77 168.86h2.50v2.54h-2.50zM296.78 168.86h2.50v2.54h-2.50zM309.29 168.86h10.01v2.54h-10.01zM231.71 171.41h7.51v2.54h-7.51zM241.72 171.41h5.01v2.54h-5.01zM249.22 171.41h7.51v2.54h-7.51zM259.24 171.41h5.01v2.54h-5.01zM266.74 171.41h2.50v2.54h-2.50zM271.75 171.41h10.01v2.54h-10.01zM284.26 171.41h15.02v2.54h-15.02zM304.28 171.41h2.50v2.54h-2.50zM314.29 171.41h2.50v2.54h-2.50zM231.71 173.95h5.01v2.54h-5.01zM246.72 173.95h5.01v2.54h-5.01zM254.23 173.95h5.01v2.54h-5.01zM261.74 173.95h2.50v2.54h-2.50zM269.25 173.95h10.01v2.54h-10.01zM286.76 173.95h10.01v2.54h-10.01zM299.28 173.95h10.01v2.54h-10.01zM311.79 173.95h2.50v2.54h-2.50zM316.80 173.95h2.50v2.54h-2.50zM226.70 176.49h5.01v2.54h-5.01zM239.21 176.49h5.01v2.54h-5.01zM246.72 176.49h2.50v2.54h-2.50zM254.23 176.49h12.51v2.54h-12.51zM274.25 176.49h2.50v2.54h-2.50zM279.26 176.49h15.02v2.54h-15.02zM304.28 176.49h7.51v2.54h-7.51zM251.73 179.03h17.52v2.54h-17.52zM281.76 179.03h2.50v2.54h-2.50zM291.77 179.03h2.50v2.54h-2.50zM306.79 179.03h2.50v2.54h-2.50zM314.29 179.03h5.01v2.54h-5.01zM226.70 181.57h12.51v2.54h-12.51zM241.72 181.57h7.51v2.54h-7.51zM259.24 181.57h2.50v2.54h-2.50zM266.74 181.57h2.50v2.54h-2.50zM271.75 181.57h10.01v2.54h-10.01zM284.26 181.57h2.50v2.54h-2.50zM289.27 181.57h5.01v2.54h-5.01zM296.78 181.57h7.51v2.54h-7.51zM311.79 181.57h7.51v2.54h-7.51zM226.70 184.11h5.01v2.54h-5.01zM234.21 184.11h2.50v2.54h-2.50zM249.22 184.11h2.50v2.54h-2.50zM256.73 184.11h2.50v2.54h-2.50zM261.74 184.11h5.01v2.54h-5.01zM271.75 184.11h2.50v2.54h-2.50zM281.76 184.11h2.50v2.54h-2.50zM291.77 184.11h10.01v2.54h-10.01zM304.28 184.11h5.01v2.54h-5.01zM234.21 186.65h5.01v2.54h-5.01zM241.72 186.65h2.50v2.54h-2.50zM249.22 186.65h2.50v2.54h-2.50zM264.24 186.65h7.51v2.54h-7.51zM276.75 186.65h10.01v2.54h-10.01zM289.27 186.65h2.50v2.54h-2.50zM294.27 186.65h5.01v2.54h-5.01zM306.79 186.65h10.01v2.54h-10.01zM229.20 189.19h7.51v2.54h-7.51zM244.22 189.19h5.01v2.54h-5.01zM251.73 189.19h2.50v2.54h-2.50zM259.24 189.19h2.50v2.54h-2.50zM269.25 189.19h7.51v2.54h-7.51zM279.26 189.19h5.01v2.54h-5.01zM299.28 189.19h10.01v2.54h-10.01zM314.29 189.19h5.01v2.54h-5.01zM226.70 191.73h2.50v2.54h-2.50zM231.71 191.73h5.01v2.54h-5.01zM241.72 191.73h2.50v2.54h-2.50zM249.22 191.73h2.50v2.54h-2.50zM254.23 191.73h7.51v2.54h-7.51zM266.74 191.73h20.02v2.54h-20.02zM304.28 191.73h7.51v2.54h-7.51zM231.71 194.27h10.01v2.54h-10.01zM244.22 194.27h2.50v2.54h-2.50zM249.22 194.27h2.50v2.54h-2.50zM254.23 194.27h2.50v2.54h-2.50zM261.74 194.27h5.01v2.54h-5.01zM269.25 194.27h2.50v2.54h-2.50zM274.25 194.27h7.51v2.54h-7.51zM284.26 194.27h2.50v2.54h-2.50zM296.78 194.27h2.50v2.54h-2.50zM226.70 196.81h2.50v2.54h-2.50zM234.21 196.81h10.01v2.54h-10.01zM249.22 196.81h10.01v2.54h-10.01zM261.74 196.81h7.51v2.54h-7.51zM274.25 196.81h10.01v2.54h-10.01zM286.76 196.81h15.02v2.54h-15.02zM304.28 196.81h15.02v2.54h-15.02zM231.71 199.35h5.01v2.54h-5.01zM244.22 199.35h2.50v2.54h-2.50zM251.73 199.35h5.01v2.54h-5.01zM261.74 199.35h10.01v2.54h-10.01zM276.75 199.35h10.01v2.54h-10.01zM294.27 199.35h10.01v2.54h-10.01zM314.29 199.35h2.50v2.54h-2.50zM226.70 201.89h2.50v2.54h-2.50zM231.71 201.89h5.01v2.54h-5.01zM241.72 201.89h2.50v2.54h-2.50zM249.22 201.89h7.51v2.54h-7.51zM264.24 201.89h2.50v2.54h-2.50zM269.25 201.89h7.51v2.54h-7.51zM279.26 201.89h2.50v2.54h-2.50zM284.26 201.89h5.01v2.54h-5.01zM294.27 201.89h10.01v2.54h-10.01zM306.79 201.89h2.50v2.54h-2.50zM314.29 201.89h5.01v2.54h-5.01zM234.21 204.43h5.01v2.54h-5.01zM246.72 204.43h5.01v2.54h-5.01zM261.74 204.43h5.01v2.54h-5.01zM269.25 204.43h20.02v2.54h-20.02zM296.78 204.43h2.50v2.54h-2.50zM301.78 204.43h7.51v2.54h-7.51zM314.29 204.43h5.01v2.54h-5.01zM231.71 206.97h15.02v2.54h-15.02zM251.73 206.97h7.51v2.54h-7.51zM261.74 206.97h12.51v2.54h-12.51zM286.76 206.97h7.51v2.54h-7.51zM296.78 206.97h7.51v2.54h-7.51zM311.79 206.97h5.01v2.54h-5.01zM234.21 209.51h2.50v2.54h-2.50zM256.73 209.51h7.51v2.54h-7.51zM269.25 209.51h2.50v2.54h-2.50zM274.25 209.51h7.51v2.54h-7.51zM284.26 209.51h2.50v2.54h-2.50zM296.78 209.51h5.01v2.54h-5.01zM314.29 209.51h5.01v2.54h-5.01zM226.70 212.05h10.01v2.54h-10.01zM239.21 212.05h10.01v2.54h-10.01zM254.23 212.05h2.50v2.54h-2.50zM261.74 212.05h2.50v2.54h-2.50zM269.25 212.05h12.51v2.54h-12.51zM284.26 212.05h7.51v2.54h-7.51zM294.27 212.05h2.50v2.54h-2.50zM304.28 212.05h2.50v2.54h-2.50zM311.79 212.05h5.01v2.54h-5.01zM234.21 214.59h5.01v2.54h-5.01zM244.22 214.59h5.01v2.54h-5.01zM254.23 214.59h7.51v2.54h-7.51zM264.24 214.59h5.01v2.54h-5.01zM281.76 214.59h2.50v2.54h-2.50zM286.76 214.59h15.02v2.54h-15.02zM304.28 214.59h15.02v2.54h-15.02zM236.71 217.14h2.50v2.54h-2.50zM241.72 217.14h2.50v2.54h-2.50zM251.73 217.14h2.50v2.54h-2.50zM256.73 217.14h2.50v2.54h-2.50zM264.24 217.14h15.02v2.54h-15.02zM284.26 217.14h2.50v2.54h-2.50zM289.27 217.14h5.01v2.54h-5.01zM296.78 217.14h17.52v2.54h-17.52zM249.22 219.68h2.50v2.54h-2.50zM254.23 219.68h5.01v2.54h-5.01zM261.74 219.68h2.50v2.54h-2.50zM281.76 219.68h7.51v2.54h-7.51zM291.77 219.68h7.51v2.54h-7.51zM306.79 219.68h2.50v2.54h-2.50zM314.29 219.68h5.01v2.54h-5.01zM226.70 222.22h17.52v2.54h-17.52zM246.72 222.22h5.01v2.54h-5.01zM254.23 222.22h25.03v2.54h-25.03zM284.26 222.22h5.01v2.54h-5.01zM296.78 222.22h2.50v2.54h-2.50zM301.78 222.22h2.50v2.54h-2.50zM306.79 222.22h2.50v2.54h-2.50zM314.29 222.22h5.01v2.54h-5.01zM226.70 224.76h2.50v2.54h-2.50zM241.72 224.76h2.50v2.54h-2.50zM246.72 224.76h5.01v2.54h-5.01zM259.24 224.76h7.51v2.54h-7.51zM269.25 224.76h7.51v2.54h-7.51zM289.27 224.76h10.01v2.54h-10.01zM306.79 224.76h2.50v2.54h-2.50zM226.70 227.30h2.50v2.54h-2.50zM231.71 227.30h7.51v2.54h-7.51zM241.72 227.30h2.50v2.54h-2.50zM246.72 227.30h12.51v2.54h-12.51zM269.25 227.30h7.51v2.54h-7.51zM279.26 227.30h5.01v2.54h-5.01zM289.27 227.30h5.01v2.54h-5.01zM296.78 227.30h22.52v2.54h-22.52zM226.70 229.84h2.50v2.54h-2.50zM231.71 229.84h7.51v2.54h-7.51zM241.72 229.84h2.50v2.54h-2.50zM249.22 229.84h5.01v2.54h-5.01zM259.24 229.84h5.01v2.54h-5.01zM266.74 229.84h7.51v2.54h-7.51zM281.76 229.84h10.01v2.54h-10.01zM294.27 229.84h7.51v2.54h-7.51zM304.28 229.84h15.02v2.54h-15.02zM226.70 232.38h2.50v2.54h-2.50zM231.71 232.38h7.51v2.54h-7.51zM241.72 232.38h2.50v2.54h-2.50zM246.72 232.38h15.02v2.54h-15.02zM264.24 232.38h7.51v2.54h-7.51zM274.25 232.38h2.50v2.54h-2.50zM284.26 232.38h10.01v2.54h-10.01zM296.78 232.38h20.02v2.54h-20.02zM226.70 234.92h2.50v2.54h-2.50zM241.72 234.92h2.50v2.54h-2.50zM249.22 234.92h7.51v2.54h-7.51zM259.24 234.92h5.01v2.54h-5.01zM266.74 234.92h15.02v2.54h-15.02zM291.77 234.92h5.01v2.54h-5.01zM299.28 234.92h5.01v2.54h-5.01zM311.79 234.92h7.51v2.54h-7.51zM226.70 237.46h17.52v2.54h-17.52zM246.72 237.46h7.51v2.54h-7.51zM256.73 237.46h12.51v2.54h-12.51zM281.76 237.46h37.54v2.54h-37.54z" fill="#0a0a0a" stroke="#0a0a0a" stroke-width="0.25"/><rect x="261.0" y="181.0" width="24.6" height="24.6" rx="3.5" fill="#fbfbfb"/><circle cx="273.3" cy="193.3" r="9.8" fill="#fbf3e2" stroke="#eca024" stroke-width="1.5"/><path d="M270.1 185.70000000000002h6.4M270.1 200.9h6.4M273.3 185.9v14.8" stroke="#eca024" stroke-width="2" fill="none"/><text x="273.3" y="192.9" font-family="Liberation Sans, sans-serif" font-size="4.4" font-weight="700" fill="#6b7f9a" text-anchor="middle">PMSM</text><text x="273.3" y="197.5" font-family="Liberation Sans, sans-serif" font-size="4.4" font-weight="700" fill="#6b7f9a" text-anchor="middle">Control</text>
</svg>
<span class="t" id="t0" style="left:1.2px;top:116.46px;font-size:16px;color:#96531f;letter-spacing:0.383px;z-index:1;">ControllerModel</span>
<span class="t" id="t1" style="left:1.4px;top:142.18px;font-size:15.5px;color:#fff;letter-spacing:-0.160px;z-index:1;">Nanjing</span>
<span class="t" id="t2" style="left:1.4px;top:161.88px;font-size:15.5px;color:#fff;z-index:1;">FarDriver</span>
<span class="t" id="t3" style="left:121.5px;top:145.42px;font-size:12.5px;color:#1c1c1c;letter-spacing:-0.550px;transform:scaleX(0.9282);z-index:1;">IPMSM</span>
<span class="t" id="t4" style="left:122px;top:161.42px;font-size:12.5px;color:#1c1c1c;letter-spacing:0.090px;z-index:1;">Controller</span>
<span class="t" id="t5" style="left:1.4px;top:186.42px;font-size:12.5px;color:#1c1c1c;letter-spacing:-0.112px;z-index:1;">Model</span>
<span class="t" id="t6" style="left:44.4px;top:186.42px;font-size:12.5px;color:#111;font-weight:700;letter-spacing:-0.050px;z-index:1;">YQ144V0A_88_101</span>
<span class="t" id="t7" style="left:1.4px;top:204.42px;font-size:12.5px;color:#1c1c1c;letter-spacing:0.033px;z-index:1;">Voltage/Power</span>
<span class="t" id="t8" style="left:92.4px;top:204.42px;font-size:12.5px;color:#1c1c1c;letter-spacing:-0.241px;z-index:1;">144V20000W</span>
<span class="t" id="t9" style="left:1.4px;top:221.42px;font-size:12.5px;color:#1c1c1c;letter-spacing:-0.183px;z-index:1;">Current Line/Phase</span>
<span class="t" id="t10" style="left:115.6px;top:221.42px;font-size:12.5px;color:#1c1c1c;letter-spacing:-0.157px;z-index:1;">999A/9999A</span>
<span class="t" id="t11" style="left:1.4px;top:255.30px;font-size:15px;color:#111;font-weight:700;letter-spacing:0.278px;z-index:1;">SerialNumber</span>
<span class="t" id="t12" style="left:111.4px;top:255.30px;font-size:15px;color:#111;font-weight:700;letter-spacing:0.481px;z-index:1;">CHINA96Z201901010001</span>
<span class="t" id="t13" style="left:1.4px;top:290.46px;font-size:16px;color:#1c1c1c;letter-spacing:0.136px;z-index:1;">CustomCode</span>
<span class="t" id="t14" style="left:108.4px;top:290.46px;font-size:16px;color:#1c1c1c;letter-spacing:-0.550px;transform:scaleX(0.9568);z-index:1;">YQ</span>
<span class="t" id="t15" style="left:1.2px;top:323.96px;font-size:16px;color:#96531f;letter-spacing:0.005px;z-index:1;">DateTime</span>
<span class="t" id="t16" style="left:1.4px;top:357.42px;font-size:12.5px;color:#1c1c1c;letter-spacing:-0.469px;z-index:1;">Date</span>
<span class="t" id="t17" style="left:35.6px;top:357.42px;font-size:12.5px;color:#8f9a1e;letter-spacing:0.361px;z-index:1;">2008-12-31</span>
<span class="t" id="t18" style="left:112.4px;top:357.42px;font-size:12.5px;color:#1c1c1c;letter-spacing:-0.376px;z-index:1;">Time</span>
<span class="t" id="t19" style="left:148.4px;top:357.42px;font-size:12.5px;color:#8f9a1e;letter-spacing:-0.210px;z-index:1;">10:22:23</span>
<span class="t" id="t20" style="left:1.2px;top:387.96px;font-size:16px;color:#96531f;letter-spacing:0.050px;z-index:1;">Motor Parameters</span>
<span class="t" id="t21" style="left:1.4px;top:421.92px;font-size:12.5px;color:#1c1c1c;letter-spacing:-0.487px;z-index:1;">Pole Pairs</span>
<span class="t" id="t22" style="left:87.7px;top:421.92px;font-size:12.5px;color:#1c1c1c;z-index:1;">5</span>
<span class="t" id="t23" style="left:150.6px;top:421.92px;font-size:12.5px;color:#1c1c1c;letter-spacing:0.084px;z-index:1;">Direction</span>
<span class="t" id="t24" style="left:229px;top:421.92px;font-size:12.5px;color:#1c1c1c;z-index:1;">0</span>
<span class="t" id="t25" style="left:1.4px;top:460.12px;font-size:12.5px;color:#1c1c1c;letter-spacing:-0.380px;z-index:1;">RatedSpeed</span>
<span class="t" id="t26" style="left:87.7px;top:460.12px;font-size:12.5px;color:#1c1c1c;letter-spacing:-0.550px;transform:scaleX(0.9763);z-index:1;">0RPM</span>
<span class="t" id="t27" style="left:150.6px;top:460.12px;font-size:12.5px;color:#1c1c1c;letter-spacing:-0.481px;z-index:1;">MaxSpeed</span>
<span class="t" id="t28" style="left:229px;top:460.12px;font-size:12.5px;color:#1c1c1c;letter-spacing:-0.550px;transform:scaleX(0.9672);z-index:1;">0RPM</span>
<span class="t" id="t29" style="left:150.6px;top:498.92px;font-size:12.5px;color:#1c1c1c;letter-spacing:-0.442px;z-index:1;">BackSpeed</span>
<span class="t" id="t30" style="left:229px;top:498.92px;font-size:12.5px;color:#1c1c1c;letter-spacing:-0.550px;transform:scaleX(0.9672);z-index:1;">0RPM</span>
<span class="t" id="t31" style="left:1.4px;top:536.92px;font-size:12.5px;color:#1c1c1c;letter-spacing:-0.177px;z-index:1;">RagedVoltage</span>
<span class="t" id="t32" style="left:87.7px;top:536.92px;font-size:12.5px;color:#8f9a1e;letter-spacing:-0.434px;z-index:1;">108V</span>
<span class="t" id="t33" style="left:150.6px;top:536.92px;font-size:12.5px;color:#1c1c1c;letter-spacing:-0.377px;z-index:1;">RatedPower</span>
<span class="t" id="t34" style="left:229px;top:536.92px;font-size:12.5px;color:#8f9a1e;letter-spacing:-0.173px;z-index:1;">15000W</span>
<span class="t" id="t35" style="left:1.4px;top:575.02px;font-size:12.5px;color:#1c1c1c;letter-spacing:-0.550px;transform:scaleX(0.9135);z-index:1;">LD</span>
<span class="t" id="t36" style="left:87.7px;top:575.02px;font-size:12.5px;color:#8f9a1e;letter-spacing:-0.280px;z-index:1;">223</span>
<span class="t" id="t37" style="left:150.6px;top:575.02px;font-size:12.5px;color:#1c1c1c;letter-spacing:-0.550px;transform:scaleX(0.9543);z-index:1;">LQ</span>
<span class="t" id="t38" style="left:229px;top:575.02px;font-size:12.5px;color:#8f9a1e;letter-spacing:-0.430px;z-index:1;">323</span>
<span class="t" id="t39" style="left:1.4px;top:613.12px;font-size:12.5px;color:#1c1c1c;letter-spacing:-0.550px;transform:scaleX(0.9533);z-index:1;">FAIF</span>
<span class="t" id="t40" style="left:87.7px;top:613.12px;font-size:12.5px;color:#8f9a1e;letter-spacing:-0.280px;z-index:1;">357</span>
<span class="t" id="t41" style="left:1.4px;top:651.72px;font-size:12.5px;color:#1c1c1c;letter-spacing:-0.288px;z-index:1;">TempSensor</span>
<span class="t" id="t42" style="left:87.7px;top:651.72px;font-size:12.5px;color:#1c1c1c;letter-spacing:-0.550px;transform:scaleX(0.9572);z-index:1;">NONE</span>
<span class="t" id="t43" style="left:150.6px;top:651.72px;font-size:12.5px;color:#1c1c1c;letter-spacing:-0.016px;z-index:1;">PhaseOffset</span>
<span class="t" id="t44" style="left:229px;top:651.72px;font-size:12.5px;color:#1c1c1c;z-index:1;">0</span>
<span class="t" id="t45" style="left:343.2px;top:3.76px;font-size:16px;color:#96531f;letter-spacing:-0.260px;z-index:1;">CurrentParas</span>
<span class="t" id="t46" style="left:343.2px;top:37.92px;font-size:12.5px;color:#1c1c1c;letter-spacing:-0.188px;z-index:1;">MaxLineCurrent</span>
<span class="t" id="t47" style="left:446px;top:37.92px;font-size:12.5px;color:#1c1c1c;letter-spacing:0.199px;z-index:1;">999A</span>
<span class="t" id="t48" style="left:484.8px;top:37.92px;font-size:12.5px;color:#1c1c1c;letter-spacing:-0.325px;z-index:1;">MaxPhaseCurrent</span>
<span class="t" id="t49" style="left:590px;top:37.92px;font-size:12.5px;color:#1c1c1c;letter-spacing:0.586px;z-index:1;width:36px;overflow:hidden;">9999A</span>
<span class="t" id="t50" style="left:343.2px;top:76.12px;font-size:12.5px;color:#1c1c1c;letter-spacing:-0.099px;z-index:1;">StopBackCurrent</span>
<span class="t" id="t51" style="left:446px;top:76.12px;font-size:12.5px;color:#1c1c1c;letter-spacing:0.703px;z-index:1;">0A</span>
<span class="t" id="t52" style="left:484.8px;top:76.12px;font-size:12.5px;color:#1c1c1c;letter-spacing:-0.238px;z-index:1;">MaxBackCurrent</span>
<span class="t" id="t53" style="left:590px;top:76.12px;font-size:12.5px;color:#1c1c1c;letter-spacing:0.703px;z-index:1;">0A</span>
<span class="t" id="t54" style="left:343.2px;top:107.06px;font-size:16px;color:#96531f;letter-spacing:0.110px;z-index:1;">RotationLimitRatio</span>
<span class="t" id="t55" style="left:343.4px;top:139.92px;font-size:12.5px;color:#1c1c1c;letter-spacing:-0.550px;transform:scaleX(0.9719);z-index:1;">500RPM</span>
<span class="t" id="t56" style="left:405px;top:139.92px;font-size:12.5px;color:#1c1c1c;letter-spacing:-0.550px;transform:scaleX(0.9128);z-index:1;">0%</span>
<span class="t" id="t57" style="left:442.8px;top:139.92px;font-size:12.5px;color:#1c1c1c;letter-spacing:-0.550px;transform:scaleX(0.9906);z-index:1;">1000RPM</span>
<span class="t" id="t58" style="left:504px;top:139.92px;font-size:12.5px;color:#1c1c1c;letter-spacing:-0.550px;transform:scaleX(0.9128);z-index:1;">0%</span>
<span class="t" id="t59" style="left:343.4px;top:177.92px;font-size:12.5px;color:#1c1c1c;letter-spacing:-0.550px;transform:scaleX(0.9829);z-index:1;">1500RPM</span>
<span class="t" id="t60" style="left:405px;top:177.92px;font-size:12.5px;color:#1c1c1c;letter-spacing:-0.550px;transform:scaleX(0.9128);z-index:1;">0%</span>
<span class="t" id="t61" style="left:442.8px;top:177.92px;font-size:12.5px;color:#1c1c1c;letter-spacing:-0.550px;transform:scaleX(0.9906);z-index:1;">2000RPM</span>
<span class="t" id="t62" style="left:504px;top:177.92px;font-size:12.5px;color:#1c1c1c;letter-spacing:-0.550px;transform:scaleX(0.9128);z-index:1;">0%</span>
<span class="t" id="t63" style="left:343.4px;top:216.92px;font-size:12.5px;color:#1c1c1c;letter-spacing:-0.550px;transform:scaleX(0.9829);z-index:1;">2500RPM</span>
<span class="t" id="t64" style="left:405px;top:216.92px;font-size:12.5px;color:#1c1c1c;letter-spacing:-0.550px;transform:scaleX(0.9128);z-index:1;">0%</span>
<span class="t" id="t65" style="left:442.8px;top:216.92px;font-size:12.5px;color:#1c1c1c;letter-spacing:-0.550px;transform:scaleX(0.9906);z-index:1;">3000RPM</span>
<span class="t" id="t66" style="left:504px;top:216.92px;font-size:12.5px;color:#1c1c1c;letter-spacing:-0.550px;transform:scaleX(0.9128);z-index:1;">0%</span>
<span class="t" id="t67" style="left:343.4px;top:254.92px;font-size:12.5px;color:#1c1c1c;letter-spacing:-0.550px;transform:scaleX(0.9829);z-index:1;">3500RPM</span>
<span class="t" id="t68" style="left:405px;top:254.92px;font-size:12.5px;color:#1c1c1c;letter-spacing:-0.550px;transform:scaleX(0.9128);z-index:1;">0%</span>
<span class="t" id="t69" style="left:442.8px;top:254.92px;font-size:12.5px;color:#1c1c1c;letter-spacing:-0.550px;transform:scaleX(0.9906);z-index:1;">4000RPM</span>
<span class="t" id="t70" style="left:504px;top:254.92px;font-size:12.5px;color:#1c1c1c;letter-spacing:-0.550px;transform:scaleX(0.9128);z-index:1;">0%</span>
<span class="t" id="t71" style="left:343.4px;top:293.92px;font-size:12.5px;color:#1c1c1c;letter-spacing:-0.550px;transform:scaleX(0.9829);z-index:1;">4500RPM</span>
<span class="t" id="t72" style="left:405px;top:293.92px;font-size:12.5px;color:#1c1c1c;letter-spacing:-0.550px;transform:scaleX(0.9128);z-index:1;">0%</span>
<span class="t" id="t73" style="left:442.8px;top:293.92px;font-size:12.5px;color:#1c1c1c;letter-spacing:-0.550px;transform:scaleX(0.9906);z-index:1;">5000RPM</span>
<span class="t" id="t74" style="left:504px;top:293.92px;font-size:12.5px;color:#1c1c1c;letter-spacing:-0.550px;transform:scaleX(0.9128);z-index:1;">0%</span>
<span class="t" id="t75" style="left:343.4px;top:331.92px;font-size:12.5px;color:#1c1c1c;letter-spacing:-0.550px;transform:scaleX(0.9829);z-index:1;">5500RPM</span>
<span class="t" id="t76" style="left:405px;top:331.92px;font-size:12.5px;color:#1c1c1c;letter-spacing:-0.550px;transform:scaleX(0.9128);z-index:1;">0%</span>
<span class="t" id="t77" style="left:442.8px;top:331.92px;font-size:12.5px;color:#1c1c1c;letter-spacing:-0.550px;transform:scaleX(0.9906);z-index:1;">6000RPM</span>
<span class="t" id="t78" style="left:504px;top:331.92px;font-size:12.5px;color:#1c1c1c;letter-spacing:-0.550px;transform:scaleX(0.9128);z-index:1;">0%</span>
<span class="t" id="t79" style="left:343.4px;top:370.92px;font-size:12.5px;color:#1c1c1c;letter-spacing:-0.550px;transform:scaleX(0.9829);z-index:1;">6500RPM</span>
<span class="t" id="t80" style="left:405px;top:370.92px;font-size:12.5px;color:#1c1c1c;letter-spacing:-0.550px;transform:scaleX(0.9128);z-index:1;">0%</span>
<span class="t" id="t81" style="left:442.8px;top:370.92px;font-size:12.5px;color:#1c1c1c;letter-spacing:-0.550px;transform:scaleX(0.9906);z-index:1;">7000RPM</span>
<span class="t" id="t82" style="left:504px;top:370.92px;font-size:12.5px;color:#1c1c1c;letter-spacing:-0.550px;transform:scaleX(0.9128);z-index:1;">0%</span>
<span class="t" id="t83" style="left:343.4px;top:408.92px;font-size:12.5px;color:#1c1c1c;letter-spacing:-0.550px;transform:scaleX(0.9829);z-index:1;">7500RPM</span>
<span class="t" id="t84" style="left:405px;top:408.92px;font-size:12.5px;color:#1c1c1c;letter-spacing:-0.550px;transform:scaleX(0.9128);z-index:1;">0%</span>
<span class="t" id="t85" style="left:442.8px;top:408.92px;font-size:12.5px;color:#1c1c1c;letter-spacing:-0.550px;transform:scaleX(0.9906);z-index:1;">8000RPM</span>
<span class="t" id="t86" style="left:504px;top:408.92px;font-size:12.5px;color:#1c1c1c;letter-spacing:-0.550px;transform:scaleX(0.9128);z-index:1;">0%</span>
<span class="t" id="t87" style="left:343.4px;top:447.92px;font-size:12.5px;color:#1c1c1c;letter-spacing:-0.550px;transform:scaleX(0.9829);z-index:1;">8500RPM</span>
<span class="t" id="t88" style="left:405px;top:447.92px;font-size:12.5px;color:#1c1c1c;letter-spacing:-0.550px;transform:scaleX(0.9128);z-index:1;">0%</span>
<span class="t" id="t89" style="left:442.8px;top:447.92px;font-size:12.5px;color:#1c1c1c;letter-spacing:-0.550px;transform:scaleX(0.9906);z-index:1;">9000RPM</span>
<span class="t" id="t90" style="left:504px;top:447.92px;font-size:12.5px;color:#1c1c1c;letter-spacing:-0.550px;transform:scaleX(0.9128);z-index:1;">0%</span>
<span class="t" id="t91" style="left:343.2px;top:479.16px;font-size:16px;color:#96531f;letter-spacing:0.240px;z-index:1;">Three-Speed Limit Ratio</span>
<span class="t" id="t92" style="left:343.2px;top:512.42px;font-size:12.5px;color:#1c1c1c;letter-spacing:-0.268px;z-index:1;">Low LineCurr</span>
<span class="t" id="t93" style="left:433.7px;top:512.42px;font-size:12.5px;color:#1c1c1c;letter-spacing:-0.550px;transform:scaleX(0.9642);z-index:1;">0%</span>
<span class="t" id="t94" style="left:496.3px;top:512.42px;font-size:12.5px;color:#1c1c1c;letter-spacing:-0.188px;z-index:1;">Mid LineCurr</span>
<span class="t" id="t95" style="left:584.9px;top:512.42px;font-size:12.5px;color:#1c1c1c;letter-spacing:-0.550px;transform:scaleX(0.9185);z-index:1;">0%</span>
<span class="t" id="t96" style="left:343.2px;top:550.62px;font-size:12.5px;color:#1c1c1c;letter-spacing:-0.330px;z-index:1;">Low PhaseCurr</span>
<span class="t" id="t97" style="left:433.7px;top:550.62px;font-size:12.5px;color:#1c1c1c;letter-spacing:-0.550px;transform:scaleX(0.9642);z-index:1;">0%</span>
<span class="t" id="t98" style="left:496.3px;top:550.62px;font-size:12.5px;color:#1c1c1c;letter-spacing:-0.256px;z-index:1;">Mid PhaseCurr</span>
<span class="t" id="t99" style="left:584.9px;top:550.62px;font-size:12.5px;color:#1c1c1c;letter-spacing:-0.550px;transform:scaleX(0.9185);z-index:1;">0%</span>
<span class="t" id="t100" style="left:343.2px;top:589.02px;font-size:12.5px;color:#1c1c1c;letter-spacing:-0.550px;transform:scaleX(0.9924);z-index:1;">Low RPM</span>
<span class="t" id="t101" style="left:433.7px;top:589.02px;font-size:12.5px;color:#1c1c1c;letter-spacing:-0.545px;z-index:1;">0RPM</span>
<span class="t" id="t102" style="left:496.3px;top:589.02px;font-size:12.5px;color:#1c1c1c;letter-spacing:-0.534px;z-index:1;">Mid RPM</span>
<span class="t" id="t103" style="left:584.9px;top:589.02px;font-size:12.5px;color:#1c1c1c;letter-spacing:-0.550px;transform:scaleX(0.9702);z-index:1;">0RPM</span>
<span class="t" id="t104" style="left:343.2px;top:620.26px;font-size:16px;color:#96531f;letter-spacing:0.101px;z-index:1;">Throttle Paras</span>
<span class="t" id="t105" style="left:343.2px;top:653.82px;font-size:12.5px;color:#1c1c1c;letter-spacing:-0.022px;z-index:1;">Low Threshold</span>
<span class="t" id="t106" style="left:433.7px;top:653.82px;font-size:12.5px;color:#1c1c1c;letter-spacing:-0.197px;z-index:1;">0V</span>
<span class="t" id="t107" style="left:471px;top:653.82px;font-size:12.5px;color:#1c1c1c;letter-spacing:0.012px;z-index:1;">High Threshold</span>
<span class="t" id="t108" style="left:564px;top:653.82px;font-size:12.5px;color:#1c1c1c;letter-spacing:-0.550px;transform:scaleX(0.9968);z-index:1;">0V</span>
<span class="t" id="t109" style="left:706px;top:8.51px;font-size:10.5px;color:#fff;font-weight:700;letter-spacing:-0.437px;z-index:1;">5:33 PM | 0.1KB/s</span>
<span class="t" id="t110" style="left:700px;top:35.51px;font-size:10.5px;color:#d3e9fc;letter-spacing:-0.550px;transform:scaleX(0.9570);z-index:1;-webkit-text-stroke:0.35px #d3e9fc;">FIRSTPAGE</span>
<span class="t" id="t111" style="left:784.4px;top:35.87px;font-size:11.5px;color:#fff;font-weight:700;letter-spacing:-0.483px;z-index:1;">GRAPH</span>
<span class="t" id="t112" style="left:863.8px;top:35.87px;font-size:11.5px;color:#e3f1fd;letter-spacing:-0.516px;z-index:1;">CURVE</span>
<span class="t" id="t113" style="left:942.7px;top:35.87px;font-size:11.5px;color:#e3f1fd;letter-spacing:-0.107px;z-index:1;">COMM</span>
<span class="t" id="t114" style="left:831.4px;top:81.27px;font-size:17.4px;color:#1fa23a;font-weight:700;letter-spacing:0.228px;z-index:1;">XH</span>
<span class="t" id="t115" style="left:711px;top:373.27px;font-size:11.5px;color:#20207a;letter-spacing:0.230px;z-index:1;-webkit-text-stroke:0.25px;">Voltage:000.0V</span>
<span class="t" id="t116" style="left:817.6px;top:365.77px;font-size:11.5px;color:#20207a;letter-spacing:0.102px;z-index:1;-webkit-text-stroke:0.25px;">AutoLear</span>
<span class="t" id="t117" style="left:817.6px;top:380.77px;font-size:11.5px;color:#20207a;z-index:1;-webkit-text-stroke:0.25px;">n</span>
<span class="t" id="t118" style="left:908px;top:373.27px;font-size:11.5px;color:#20207a;letter-spacing:0.610px;z-index:1;-webkit-text-stroke:0.25px;">Motor Off</span>
<span class="t" id="t119" style="left:721.6px;top:464.27px;font-size:11.5px;color:#2a7a2e;letter-spacing:-0.098px;z-index:1;-webkit-text-stroke:0.25px;">LineCurr:0A</span>
<span class="t" id="t120" style="left:828px;top:464.27px;font-size:11.5px;color:#2a7a2e;letter-spacing:-0.365px;z-index:1;-webkit-text-stroke:0.25px;">MTPA</span>
<span class="t" id="t121" style="left:885px;top:464.27px;font-size:11.5px;color:#a08a1c;letter-spacing:0.293px;z-index:1;-webkit-text-stroke:0.25px;">Throttle 256/3.94V</span>
<span class="t" id="t122" style="left:721.6px;top:548.07px;font-size:11.5px;color:#2a7a2e;letter-spacing:0.010px;z-index:1;-webkit-text-stroke:0.25px;">Phase A:0A</span>
<span class="t" id="t123" style="left:903.4px;top:548.07px;font-size:11.5px;color:#2a7a2e;letter-spacing:-0.086px;z-index:1;-webkit-text-stroke:0.25px;">Phase C:0A</span>
<span class="t" id="t124" style="left:686.6px;top:566.27px;font-size:11.5px;color:#1c1ca8;letter-spacing:0.020px;z-index:1;-webkit-text-stroke:0.25px;">Rcv Frames:0</span>
<span class="t" id="t125" style="left:765.8px;top:566.27px;font-size:11.5px;color:#d8262c;letter-spacing:0.119px;z-index:1;-webkit-text-stroke:0.25px;">Disconnected</span>
<span class="t" id="t126" style="left:708.8px;top:623.77px;font-size:11.5px;color:#111;font-weight:700;letter-spacing:-0.464px;z-index:1;">CANCEL</span>
<span class="t" id="t127" style="left:707.2px;top:638.57px;font-size:11.5px;color:#111;font-weight:700;letter-spacing:-0.266px;z-index:1;">FOLLOW</span>
<span class="t" id="t128" style="left:786.2px;top:631.07px;font-size:11.5px;color:#111;font-weight:700;letter-spacing:-0.449px;z-index:1;">ANGLE TEST</span>
<span class="t" id="t129" style="left:883.7px;top:623.77px;font-size:11.5px;color:#111;font-weight:700;letter-spacing:-0.292px;z-index:1;">AUTO</span>
<span class="t" id="t130" style="left:880.5px;top:638.57px;font-size:11.5px;color:#111;font-weight:700;letter-spacing:-0.550px;transform:scaleX(0.9967);z-index:1;">LEARN</span>
<span class="t" id="t131" style="left:951.7px;top:631.07px;font-size:11.5px;color:#111;font-weight:700;letter-spacing:-0.390px;z-index:1;">SAVE</span>
<span class="t" id="t132" style="left:735.7px;top:177.72px;font-size:13.8px;color:#f5ea30;letter-spacing:0.597px;z-index:3;">0W</span>
<span class="t" id="t133" style="left:722px;top:190.47px;font-size:11.5px;color:#fff;letter-spacing:-0.207px;z-index:3;">Power x 1000W</span>
<span class="t" id="t134" style="left:910px;top:178.56px;font-size:12.8px;color:#f5ea30;letter-spacing:-0.550px;z-index:3;">0R</span>
<span class="t" id="t135" style="left:889px;top:190.47px;font-size:11.5px;color:#fff;letter-spacing:-0.550px;transform:scaleX(0.9978);z-index:3;">Speed x1000RPM</span>
<span class="t" id="t136" style="left:729px;top:318.84px;font-size:10px;color:#f5ea30;z-index:3;">0</span>
<span class="t" id="t137" style="left:718.4px;top:327.68px;font-size:9px;color:#fff;letter-spacing:-0.278px;z-index:3;">Batt Capacity</span>
<span class="t" id="t138" style="left:833px;top:326.04px;font-size:10px;color:#f5ea30;z-index:3;">0°</span>
<span class="t" id="t139" style="left:811.8px;top:335.12px;font-size:8.6px;color:#fff;letter-spacing:-0.099px;z-index:3;">MOS Temprature</span>
<span class="t" id="t140" style="left:937.6px;top:326.04px;font-size:10px;color:#f5ea30;z-index:3;">0°</span>
<span class="t" id="t141" style="left:916.8px;top:335.12px;font-size:8.6px;color:#fff;letter-spacing:-0.031px;z-index:3;">Motor Temprature</span>
<span class="t" id="t142" style="left:929px;top:435.17px;font-size:13.5px;color:#f5ea30;z-index:3;">0</span>
<svg width="1000" height="679" viewBox="0 0 1000 679" style="z-index:5;pointer-events:none">
<clipPath id="hdr"><rect x="687" y="0" width="313" height="59.5"/></clipPath><g clip-path="url(#hdr)" stroke="rgba(255,255,255,.22)" stroke-width="1" fill="none"><path d="M900 0 L838 62 M900 0 L962 62"/></g><g stroke="rgba(0,0,0,.035)" stroke-width="1" fill="none"><path d="M841 59 L690 210 M960 60 L1000 100 M50 46 L114 112 M331 0 L262 70"/></g>
<g transform="translate(149 152) scale(1.0)" opacity="0.96"><g fill="none" stroke="#dedede" stroke-width="3.6" stroke-linejoin="round" stroke-linecap="round"><path d="M0.3 -16.6 L-5.6 -8.3 L7.6 -8.3 Q9.4 -8 9.6 -6 L10.4 0.4 L-4.2 0.4"/></g><circle cx="-9.6" cy="-1.2" r="1.5" fill="#dedede"/><g fill="none" stroke="#dedede" stroke-width="3" stroke-linecap="round"><path d="M-13.6 5.8 L-20 17"/></g><path d="M-7.4 4.8 L13.8 4.8 L20.9 17.8 L17.2 17.8 L15.4 14.4 L-9 14.4 L-10.6 17.8 L-14.3 17.8 Z M-5.8 8.4 L12.2 8.4 Q13.6 8.4 13.6 10 Q13.6 11.6 12.2 11.6 L-5.8 11.6 Q-7.2 11.6 -7.2 10 Q-7.2 8.4 -5.8 8.4 Z" fill="#dedede" fill-rule="evenodd"/></g>
<g transform="translate(450 150) scale(1.0)" opacity="0.96"><g fill="none" stroke="#dedede" stroke-width="3.6" stroke-linejoin="round" stroke-linecap="round"><path d="M0.3 -16.6 L-5.6 -8.3 L7.6 -8.3 Q9.4 -8 9.6 -6 L10.4 0.4 L-4.2 0.4"/></g><circle cx="-9.6" cy="-1.2" r="1.5" fill="#dedede"/><g fill="none" stroke="#dedede" stroke-width="3" stroke-linecap="round"><path d="M-13.6 5.8 L-20 17"/></g><path d="M-7.4 4.8 L13.8 4.8 L20.9 17.8 L17.2 17.8 L15.4 14.4 L-9 14.4 L-10.6 17.8 L-14.3 17.8 Z M-5.8 8.4 L12.2 8.4 Q13.6 8.4 13.6 10 Q13.6 11.6 12.2 11.6 L-5.8 11.6 Q-7.2 11.6 -7.2 10 Q-7.2 8.4 -5.8 8.4 Z" fill="#dedede" fill-rule="evenodd"/></g>
<g transform="translate(149.5 450) scale(1.0)" opacity="0.96"><g fill="none" stroke="#dedede" stroke-width="3.6" stroke-linejoin="round" stroke-linecap="round"><path d="M0.3 -16.6 L-5.6 -8.3 L7.6 -8.3 Q9.4 -8 9.6 -6 L10.4 0.4 L-4.2 0.4"/></g><circle cx="-9.6" cy="-1.2" r="1.5" fill="#dedede"/><g fill="none" stroke="#dedede" stroke-width="3" stroke-linecap="round"><path d="M-13.6 5.8 L-20 17"/></g><path d="M-7.4 4.8 L13.8 4.8 L20.9 17.8 L17.2 17.8 L15.4 14.4 L-9 14.4 L-10.6 17.8 L-14.3 17.8 Z M-5.8 8.4 L12.2 8.4 Q13.6 8.4 13.6 10 Q13.6 11.6 12.2 11.6 L-5.8 11.6 Q-7.2 11.6 -7.2 10 Q-7.2 8.4 -5.8 8.4 Z" fill="#dedede" fill-rule="evenodd"/></g>
<g transform="translate(449.5 451.5) scale(1.0)" opacity="0.96"><g fill="none" stroke="#dedede" stroke-width="3.6" stroke-linejoin="round" stroke-linecap="round"><path d="M0.3 -16.6 L-5.6 -8.3 L7.6 -8.3 Q9.4 -8 9.6 -6 L10.4 0.4 L-4.2 0.4"/></g><circle cx="-9.6" cy="-1.2" r="1.5" fill="#dedede"/><g fill="none" stroke="#dedede" stroke-width="3" stroke-linecap="round"><path d="M-13.6 5.8 L-20 17"/></g><path d="M-7.4 4.8 L13.8 4.8 L20.9 17.8 L17.2 17.8 L15.4 14.4 L-9 14.4 L-10.6 17.8 L-14.3 17.8 Z M-5.8 8.4 L12.2 8.4 Q13.6 8.4 13.6 10 Q13.6 11.6 12.2 11.6 L-5.8 11.6 Q-7.2 11.6 -7.2 10 Q-7.2 8.4 -5.8 8.4 Z" fill="#dedede" fill-rule="evenodd"/></g>
<g transform="translate(752 150) scale(0.95)" opacity="1"><g fill="none" stroke="#f8f8f8" stroke-width="4.3" stroke-linejoin="round" stroke-linecap="round"><path d="M0.3 -16.6 L-5.6 -8.3 L7.6 -8.3 Q9.4 -8 9.6 -6 L10.4 0.4 L-4.2 0.4"/></g><circle cx="-9.6" cy="-1.2" r="1.5" fill="#f8f8f8"/><g fill="none" stroke="#f8f8f8" stroke-width="3" stroke-linecap="round"><path d="M-13.6 5.8 L-20 17"/></g><path d="M-7.4 4.8 L13.8 4.8 L20.9 17.8 L17.2 17.8 L15.4 14.4 L-9 14.4 L-10.6 17.8 L-14.3 17.8 Z M-5.8 8.4 L12.2 8.4 Q13.6 8.4 13.6 10 Q13.6 11.6 12.2 11.6 L-5.8 11.6 Q-7.2 11.6 -7.2 10 Q-7.2 8.4 -5.8 8.4 Z" fill="#f8f8f8" fill-rule="evenodd"/></g>
<g transform="translate(752 449.8) scale(0.95)" opacity="0.95"><g fill="none" stroke="#e2e2e2" stroke-width="3.6" stroke-linejoin="round" stroke-linecap="round"><path d="M0.3 -16.6 L-5.6 -8.3 L7.6 -8.3 Q9.4 -8 9.6 -6 L10.4 0.4 L-4.2 0.4"/></g><circle cx="-9.6" cy="-1.2" r="1.5" fill="#e2e2e2"/><g fill="none" stroke="#e2e2e2" stroke-width="3" stroke-linecap="round"><path d="M-13.6 5.8 L-20 17"/></g><path d="M-7.4 4.8 L13.8 4.8 L20.9 17.8 L17.2 17.8 L15.4 14.4 L-9 14.4 L-10.6 17.8 L-14.3 17.8 Z M-5.8 8.4 L12.2 8.4 Q13.6 8.4 13.6 10 Q13.6 11.6 12.2 11.6 L-5.8 11.6 Q-7.2 11.6 -7.2 10 Q-7.2 8.4 -5.8 8.4 Z" fill="#e2e2e2" fill-rule="evenodd"/></g>
</svg>
</body></html>
